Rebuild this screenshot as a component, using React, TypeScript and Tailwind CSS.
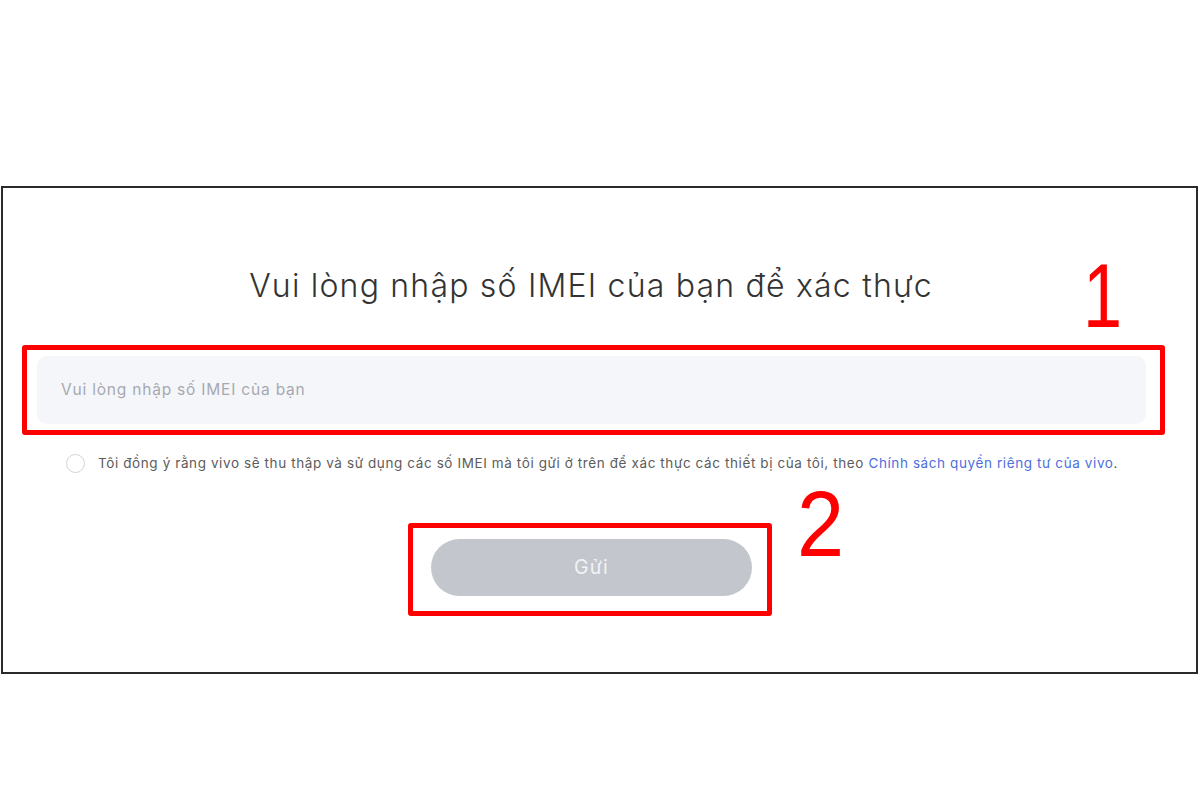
import React from "react";

export default function App() {
  return (
    <div className="w-[1200px] h-[800px] bg-white pt-[186px] pl-[1px]" style={{ fontFamily: "Inter, 'Noto Sans', sans-serif" }}>
      <div className="relative w-[1197px] h-[488px] border-2 border-[#2a2a2a] bg-white">
        <h1 className="mt-[78px] pr-[17px] text-center text-[32px] leading-[40px] font-light text-[#333] tracking-[1.2px]">
          Vui lòng nhập số IMEI của bạn để xác thực
        </h1>

        <div className="ml-[19px] mt-[39px] w-[1143px] h-[90px] border-[5px] border-[#ff0000] rounded-[3px] pl-[10px] pr-[14px] py-[6px]">
          <div className="h-full rounded-[10px] bg-[#f5f6fa] flex items-center pl-[24px]">
            <span className="text-[15.5px] text-[#a6a9b1] font-normal tracking-[0.8px]">Vui lòng nhập số IMEI của bạn</span>
          </div>
        </div>

        <div className="mt-[18px] ml-[63px] flex items-center">
          <span className="w-[19px] h-[19px] rounded-full border border-[#d4d4d4] bg-white shrink-0" />
          <p className="ml-[13px] text-[13.5px] leading-[20px] text-[#5c5c5c] whitespace-nowrap tracking-[0.6px]">
            Tôi đồng ý rằng vivo sẽ thu thập và sử dụng các số IMEI mà tôi gửi ở trên để xác thực các thiết bị của tôi, theo{" "}
            <span className="text-[#4d6fe0]">Chính sách quyền riêng tư của vivo</span>.
          </p>
        </div>

        <div className="mt-[50px] ml-[405px] w-[364px] h-[93px] border-[5px] border-[#ff0000] rounded-[3px] pl-[18px] pt-[11px]">
          <div className="w-[321px] h-[57px] rounded-full bg-[#c3c6cc] flex items-center justify-center">
            <span className="text-[19.5px] text-[#f2f3f5] tracking-[1.2px]">Gửi</span>
          </div>
        </div>

        <span
          className="absolute left-[1080px] top-[63px] text-[90px] leading-none text-[#ff0000] origin-left scale-x-[0.78]"
          style={{ fontFamily: "'Liberation Sans', Arial, sans-serif" }}
        >
          1
        </span>
        <span
          className="absolute left-[794px] top-[290px] text-[92px] leading-none text-[#ff0000] origin-left scale-x-[0.92]"
          style={{ fontFamily: "'Liberation Sans', Arial, sans-serif" }}
        >
          2
        </span>
      </div>
    </div>
  );
}
